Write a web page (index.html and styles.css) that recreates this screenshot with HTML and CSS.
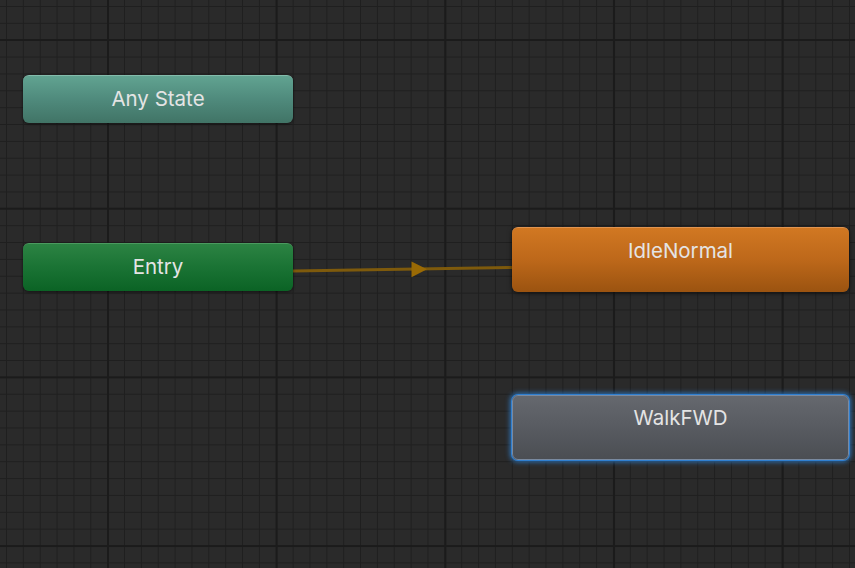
FILE: index.html
```html
<!DOCTYPE html>
<html>
<head>
<meta charset="utf-8">
<link rel="stylesheet" href="styles.css">
</head>
<body>
<div class="canvas">
  <svg class="edges" width="855" height="568" viewBox="0 0 855 568">
    <line x1="293" y1="271" x2="512" y2="267.5" stroke="#7e5a0c" stroke-width="3"/>
    <polygon points="411.5,261.5 427,269.3 411.5,277.3" fill="#9a6a05"/>
  </svg>
  <div class="node node-any"><span class="label">Any State</span></div>
  <div class="node node-entry"><span class="label">Entry</span></div>
  <div class="node node-idle"><span class="label">IdleNormal</span></div>
  <div class="node node-walk"><span class="label">WalkFWD</span></div>
</div>
</body>
</html>
```
FILE: styles.css
```css
html, body {
  margin: 0;
  padding: 0;
}
body {
  width: 855px;
  height: 568px;
  overflow: hidden;
  background: #2a2a2a;
  font-family: "Inter", "DejaVu Sans", sans-serif;
}
.canvas {
  position: relative;
  width: 855px;
  height: 568px;
  background-color: #2a2a2a;
  background-image:
    linear-gradient(to right, #1b1b1b 0, #1b1b1b 2px, transparent 2px),
    linear-gradient(to bottom, #1b1b1b 0, #1b1b1b 2px, transparent 2px),
    linear-gradient(to right, #1f1f1f 0, #1f1f1f 1px, transparent 1px),
    linear-gradient(to bottom, #1f1f1f 0, #1f1f1f 1px, transparent 1px);
  background-size:
    168.7px 168.7px,
    168.7px 168.7px,
    16.87px 16.87px,
    16.87px 16.87px;
  background-position:
    107px 0,
    0 39px,
    6px 0,
    0 6px;
}
.edges {
  position: absolute;
  left: 0;
  top: 0;
}
.node {
  position: absolute;
  box-sizing: border-box;
  border-radius: 6px;
  display: flex;
  justify-content: center;
  color: #e4e4e4;
  font-size: 20.5px;
  box-shadow: 0 1px 3px rgba(0,0,0,0.55);
}
.label {
  display: block;
  line-height: 46px;
  height: 46px;
}
.node-any {
  left: 23px;
  top: 75px;
  width: 270px;
  height: 48px;
  background: linear-gradient(to bottom, #61a391 0%, #4f8a7c 50%, #417466 100%);
  border-top: 1px solid #84bcac;
}
.node-entry {
  left: 23px;
  top: 243px;
  width: 270px;
  height: 48px;
  background: linear-gradient(to bottom, #2c8343 0%, #1a7334 50%, #0b6325 100%);
  border-top: 1px solid #4b9a5f;
}
.node-idle {
  left: 512px;
  top: 227px;
  width: 337px;
  height: 65px;
  background: linear-gradient(to bottom, #d17822 0%, #bd681a 50%, #9b5310 100%);
  border-top: 1px solid #e09450;
  box-shadow: 0 1px 5px rgba(0,0,0,0.6);
}
.node-walk {
  left: 512px;
  top: 395px;
  width: 337px;
  height: 65px;
  background: linear-gradient(to bottom, #65686e 0%, #585b61 50%, #4b4e53 100%);
  border: 1px solid #7a8aa0;
  box-shadow: 0 0 0 1px #2f7fd0, 0 0 5px 2px rgba(50,140,230,0.75);
}
.node-walk .label {
  line-height: 44px;
}
```
